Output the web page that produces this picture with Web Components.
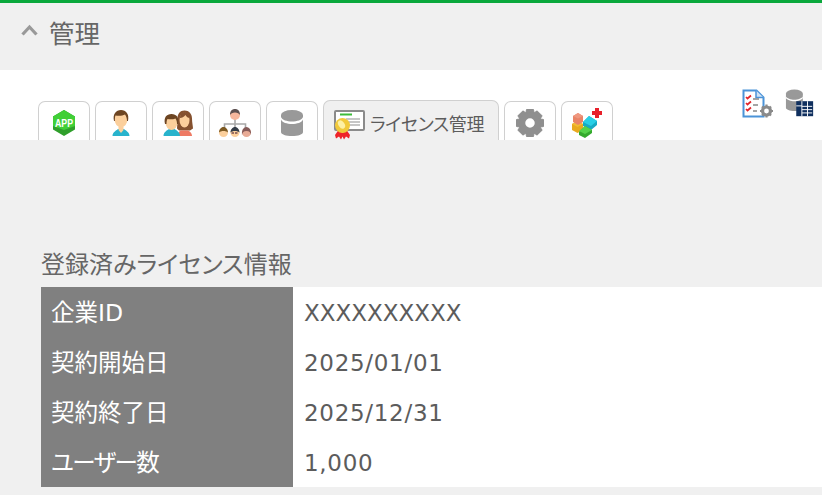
<!DOCTYPE html>
<html lang="ja">
<head>
<meta charset="utf-8">
<title>管理</title>
<style>
    html, body {
        margin: 0;
        height: 495px;
        overflow: hidden;
        background: #f0f0f0;
        font-family: "DejaVu Sans", "Noto Sans CJK JP", sans-serif;
        color: #5c5c5c;
    }
</style>
</head>
<body>
<admin-page></admin-page>

<script>
const GEAR_TOOTH = "M-3.500-13.500h7l1 6h-9z";
const gearTeeth = [0, 45, 90, 135, 180, 225, 270, 315]
    .map((angle) => `<path d="${GEAR_TOOTH}" fill="#8f8f8f" stroke="#8f8f8f" stroke-linejoin="round" transform="rotate(${angle})"/>`)
    .join("");

const ICONS = {
    app: /*html*/ `
        <polygon points="16,3 27,9.500 27,22.500 16,29 5,22.500 5,9.500" fill="#2f9f2b"/>
        <polygon points="16,3 27,9.500 27,19 16,23 5,19 5,9.500" fill="#41cf37"/>
        <text x="16" y="20" text-anchor="middle" font-family="Liberation Sans" font-weight="700" font-size="10" textLength="18" lengthAdjust="spacingAndGlyphs" fill="#fff">APP</text>`,
    user: /*html*/ `
        <path d="M7.500 29c0-4 4.500-6 5.500-7h6c1 1 5.500 3 5.500 7z" fill="#28b3cc"/>
        <path d="M13.500 20h5v3l-2.500 3-2.500-3z" fill="#fbcf9c"/>
        <ellipse cx="16" cy="12" rx="6.500" ry="8.500" fill="#fbcf9c"/>
        <path d="M9 14c-1.500-7 2-11 7-11s8.500 4 7 11h-1c0-3-1-5-2-6.500-2.500 1.500-6.500 1.500-9.500 1-.6 1-.6 3.500-.6 5.500z" fill="#6d4522"/>`,
    group: /*html*/ `
        <path d="M22.500 3.500c4.500 0 7.500 3.500 7.500 8 0 4 1 8 1 10l-3 2H17l-2-2s.5-6 .5-10c0-4.500 2.500-8 7-8z" fill="#85512f"/>
        <path d="M15.500 29c0-3 2-5.500 4-5.500h5.500c2.500 0 5 2.500 5 5.500z" fill="#ee7a64"/>
        <ellipse cx="22.500" cy="13" rx="5" ry="7.500" fill="#fbcf9c"/>
        <path d="M18 11c2 0 4-1 5.500-3 1 2 2.500 3 4 3 0-3-2-6-5-6s-4.500 3-4.500 6z" fill="#85512f"/>
        <path d="M1.500 29c0-4 4-6 5.500-7h5.500c1.500 1 5.500 3 5.500 7z" fill="#28b3cc"/>
        <ellipse cx="9.500" cy="15.500" rx="6" ry="7.500" fill="#fbcf9c"/>
        <path d="M3 17c-1.500-6.500 1.500-10 6.500-10s8 3.500 6.500 10h-1c0-2-.5-4-1.500-5.500-2.500 1-5.500 1-8 .5-.8 1-1 3-1 5z" fill="#6d4522"/>`,
    org: /*html*/ `
        <path d="M16 12v6M5.500 21v-4h21v4M16 17v4" fill="none" stroke="#a8a8a8" stroke-width="1.600"/>
        <circle cx="16" cy="8" r="5" fill="#f6b79d"/>
        <path d="M11 8c0-4 2-6 5-6s5 2 5 6c-1-1.500-2.500-2.500-5-2.500s-4 1-5 2.500z" fill="#5d5050"/>
        <circle cx="4.500" cy="25.500" r="4.500" fill="#fbcf9c"/>
        <path d="M0 25.500c0-3 2-5.500 4.500-5.500S9 22.500 9 25.500c-2-2-7-2-9 0z" fill="#7d5a23"/>
        <circle cx="16" cy="25.500" r="4.500" fill="#fbcf9c"/>
        <path d="M11.500 25.500c0-3 2-5.500 4.500-5.500s4.500 2.500 4.500 5.500c-2-2-7-2-9 0z" fill="#333c48"/>
        <path d="M12.500 26h6.500" stroke="#7a5050" stroke-width="1.500" stroke-dasharray="2.500 1"/>
        <circle cx="27.500" cy="25.500" r="4.500" fill="#e8ab96"/>
        <path d="M23 28c-.5-4.500 1.500-8 4.500-8s5 3.500 4.500 8c-.5-2.500-1.500-4-4.500-4s-4 1.500-4.500 4z" fill="#855a58"/>`,
    db: /*html*/ `
        <path d="M5 8v17c0 2.500 5 4 11 4s11-1.500 11-4V8z" fill="#999"/>
        <ellipse cx="16" cy="8" rx="11" ry="5" fill="#999"/>
        <path d="M5 10c1 3 6 4.500 11 4.500S26 13 27 10v2.500c-1 3-6 4.500-11 4.500S6 15.500 5 12.500z" fill="#fff"/>`,
    license: /*html*/ `
        <rect x="1" y="3" width="29" height="19" rx="1" fill="#fff" stroke="#8b8b8b" stroke-width="2"/>
        <path d="M6 6.500h12" stroke="#3dbb3a" stroke-width="2"/>
        <path d="M12 11h14M14 14h12M14 17h12" stroke="#8d8d8d" stroke-width="1.200"/>
        <path d="M1 27l3.500-5 4 3 4-3 3.500 5-1 3.500-3-2-2 3-1.500-3-1.500 3-2-3-3 2z" fill="#ee2429"/>
        <circle cx="8.500" cy="17.500" r="7.500" fill="#f1c93a"/>
        <ellipse cx="7.500" cy="16.500" rx="3" ry="4.500" fill="#fdf0a4" transform="rotate(-35 7.500 16.500)"/>`,
    gear: /*html*/ `
        <g transform="translate(16 16)">
            ${gearTeeth}
            <circle r="7.500" fill="none" stroke="#8f8f8f" stroke-width="5.500"/>
        </g>`,
    blocks: /*html*/ `
        <path d="M26 1h4v3h3v4h-3v3h-4V8h-3V4h3z" fill="#e8202a" transform="translate(-2 0)"/>
        <polygon points="1,17 6.500,14 12,17 12,23 6.500,26 1,23" fill="#e9a91f"/>
        <polygon points="1,17 6.500,20 12,17 6.500,14" fill="#f2bb35"/>
        <polygon points="2,9 7,6 12,9 12,15 7,18 2,15" fill="#e98468"/>
        <polygon points="2,9 7,11.500 12,9 7,6" fill="#ef9880"/>
        <polygon points="12,15 18,9 26,14 26,18 20,23 12,19" fill="#16aac4"/>
        <polygon points="12,15 18,9 26,14 20,19" fill="#27cfe6"/>
        <polygon points="8,25 14,19 21,23 21,26 14,31 8,28" fill="#35a92e"/>
        <polygon points="8,24 14,19 21,23 14,27" fill="#55d24a"/>`,
    report: /*html*/ `
        <path d="M1.500 1.500h13l7 7v19h-20z" fill="#fff" stroke="#4b93d8" stroke-width="2"/>
        <path d="M14 1.500v7h7.500" fill="#cfe2f5" stroke="#4b93d8" stroke-width="1.500"/>
        <path d="M4 8l1.500 1.500L9 6.500M4 14l1.500 1.500L9 12.500M4 20l1.500 1.500L9 18.500" fill="none" stroke="#e1252b" stroke-width="1.700"/>
        <path d="M11 10h6M11 16h5M11 22h4" stroke="#888" stroke-width="1.400"/>
        <circle cx="24.500" cy="22" r="4" fill="#fff" stroke="#8a8a8a" stroke-width="3.200"/>
        <path d="M24.500 15.500v13M18 22h13M20 17.500l9 9M29 17.500l-9 9" stroke="#8a8a8a" stroke-width="2.200" stroke-dasharray="2 9"/>`,
    dbtable: /*html*/ `
        <path d="M1 5v15c0 2 4 3.500 9 3.500s9-1.500 9-3.500V5z" fill="#999"/>
        <ellipse cx="10" cy="5" rx="9" ry="4.500" fill="#999"/>
        <path d="M1 8c1 2 5 3.500 9 3.500s8-1.500 9-3.500v1.500c-1 2-5 3.500-9 3.500S2 11.500 1 9.500z" fill="#fff"/>
        <rect x="12" y="13" width="18" height="16" fill="#0f2f5e"/>
        <path d="M18 18.500h11M18 22h11M18 25.500h11" stroke="#fff" stroke-width="1"/>
        <path d="M18 13v16M24 13v16M12 18h6" stroke="#fff" stroke-width="1"/>`,
};

class AppIcon extends HTMLElement {
    constructor() {
        super();
        this.attachShadow({ mode: "open" });
        const size = this.getAttribute("size") || 32;
        this.shadowRoot.innerHTML = /*html*/ `
            <style>
                :host { display: block; flex: none; line-height: 0; }
            </style>
            <svg width="${size}" height="${size}" viewBox="0 0 32 32">${ICONS[this.getAttribute("name")]}</svg>
        `;
    }
}

class SectionHeader extends HTMLElement {
    constructor() {
        super();
        this.attachShadow({ mode: "open" });
        this.shadowRoot.innerHTML = /*html*/ `
            <style>
                :host {
                    display: flex;
                    align-items: center;
                    gap: 11px;
                    height: 57px;
                    padding: 0 0 10px 21px;
                    border-top: 3px solid #0aa83c;
                    font-size: 25.500px;
                    color: #666;
                }
                svg { flex: none; margin-bottom: 3px; }
            </style>
            <svg width="17" height="12" viewBox="0 0 17 12">
                <path d="M1.500 10.500L8.500 3l7 7.500" fill="none" stroke="#999" stroke-width="3.200"/>
            </svg>
            <slot></slot>
        `;
    }
}

class TabItem extends HTMLElement {
    constructor() {
        super();
        this.attachShadow({ mode: "open" });
        this.shadowRoot.innerHTML = /*html*/ `
            <style>
                :host {
                    display: flex;
                    flex: none;
                    justify-content: center;
                    box-sizing: border-box;
                    width: 52px;
                    height: 39px;
                    padding-top: 5px;
                    background: #fff;
                    border: 1px solid #d0d0d0;
                    border-bottom: none;
                    border-radius: 7px 7px 0 0;
                    overflow: hidden;
                }
                :host([active]) {
                    justify-content: flex-start;
                    align-items: flex-start;
                    gap: 4px;
                    width: 176px;
                    height: 40px;
                    padding: 7px 0 0 10px;
                    background: #f0f0f0;
                    font-size: 18px;
                    letter-spacing: -0.300px;
                    font-feature-settings: "palt";
                    color: #5c5c5c;
                    white-space: nowrap;
                }
                slot { display: block; padding-top: 2px; }
            </style>
            <app-icon name="${this.getAttribute("icon")}"></app-icon>
            <slot></slot>
        `;
    }
}

class TabBar extends HTMLElement {
    constructor() {
        super();
        this.attachShadow({ mode: "open" });
        this.shadowRoot.innerHTML = /*html*/ `
            <style>
                :host {
                    display: flex;
                    align-items: flex-end;
                    gap: 5px;
                    height: 70px;
                    padding-left: 38px;
                    background: #fff;
                    overflow: hidden;
                }
                .tools {
                    display: flex;
                    align-self: flex-start;
                    gap: 11px;
                    margin-left: auto;
                    padding: 19px 7px 0 0;
                }
            </style>
            <slot></slot>
            <div class="tools">
                <app-icon name="report"></app-icon>
                <app-icon name="dbtable" size="30"></app-icon>
            </div>
        `;
    }
}

class LicenseRow extends HTMLElement {
    constructor() {
        super();
        this.attachShadow({ mode: "open" });
        this.shadowRoot.innerHTML = /*html*/ `
            <style>
                :host {
                    display: grid;
                    grid-template-columns: 252px 1fr;
                    grid-template-rows: 50px;
                    font-size: 23.500px;
                    line-height: 48px;
                }
                .key, .value {
                    box-sizing: border-box;
                    padding-top: 2px;
                }
                .key {
                    padding-left: 10px;
                    background: #808080;
                    color: #fff;
                    font-feature-settings: "palt";
                    letter-spacing: var(--key-spacing, 0);
                }
                .value {
                    padding-left: 11px;
                    background: #fff;
                    color: #5c5c5c;
                    font-size: 23px;
                    letter-spacing: var(--value-spacing, 0.700px);
                }
            </style>
            <div class="key">${this.getAttribute("label")}</div>
            <div class="value"><slot></slot></div>
        `;
    }
}

class LicenseInfo extends HTMLElement {
    constructor() {
        super();
        this.attachShadow({ mode: "open" });
        this.shadowRoot.innerHTML = /*html*/ `
            <style>
                :host {
                    display: block;
                    padding: 107px 0 0 41px;
                }
                h2 {
                    margin: 0 0 4px;
                    font-size: 24px;
                    font-weight: 400;
                    line-height: 36px;
                    font-feature-settings: "palt";
                    color: #666;
                }
            </style>
            <h2>${this.getAttribute("heading")}</h2>
            <slot></slot>
        `;
    }
}

class AdminPage extends HTMLElement {
    constructor() {
        super();
        this.attachShadow({ mode: "open" });
        this.shadowRoot.innerHTML = /*html*/ `
            <style>
                :host { display: block; }
            </style>
            <section-header>管理</section-header>
            <tab-bar>
                <tab-item icon="app"></tab-item>
                <tab-item icon="user"></tab-item>
                <tab-item icon="group"></tab-item>
                <tab-item icon="org"></tab-item>
                <tab-item icon="db"></tab-item>
                <tab-item icon="license" active>ライセンス管理</tab-item>
                <tab-item icon="gear"></tab-item>
                <tab-item icon="blocks"></tab-item>
            </tab-bar>
            <license-info heading="登録済みライセンス情報">
                <license-row label="企業ID" style="--value-spacing: 0">XXXXXXXXXX</license-row>
                <license-row label="契約開始日">2025/01/01</license-row>
                <license-row label="契約終了日">2025/12/31</license-row>
                <license-row label="ユーザー数" style="--key-spacing: -1.500px">1,000</license-row>
            </license-info>
        `;
    }
}

customElements.define("app-icon", AppIcon);
customElements.define("section-header", SectionHeader);
customElements.define("tab-item", TabItem);
customElements.define("tab-bar", TabBar);
customElements.define("license-row", LicenseRow);
customElements.define("license-info", LicenseInfo);
customElements.define("admin-page", AdminPage);
</script>
</body>
</html>
